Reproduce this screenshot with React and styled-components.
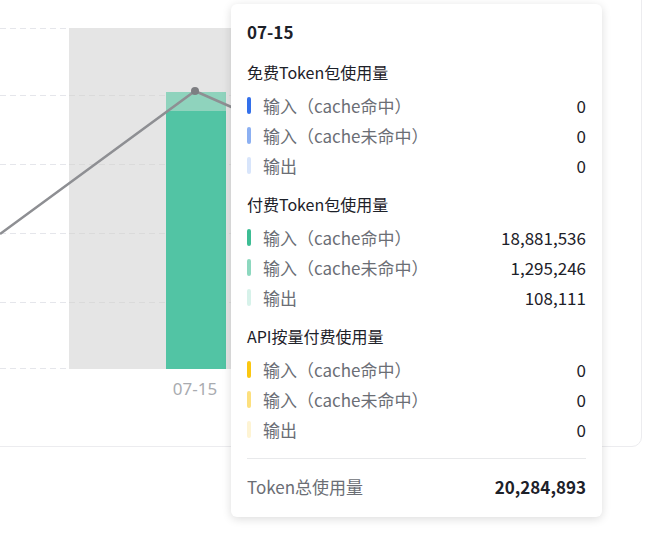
import React from "react";
import styled, { createGlobalStyle } from "styled-components";

const Global = createGlobalStyle`
  body { margin: 0; background: #fff; font-family: "Noto Sans CJK SC", "Noto Sans", sans-serif; }
`;
const Page = styled.div`position: relative; width: 650px; height: 537px; overflow: hidden;`;
const Card = styled.div`
  position: absolute; left: -20px; top: -20px; width: 660px; height: 465px;
  border: 1px solid #ececef; border-radius: 10px; background: #fff;
`;
const Chart = styled.svg`position: absolute; left: 0; top: 0;`;
const Tip = styled.div`
  position: absolute; left: 231px; top: 4px; width: 371px; box-sizing: border-box;
  padding: 14px 16px 16px; background: #fff; border-radius: 6px;
  box-shadow: 0 2px 10px rgba(0,0,0,0.14);
`;
const Title = styled.div`font-size: 17px; font-weight: 700; color: #1d2129; line-height: 28px; margin-bottom: 15px;`;
const Section = styled.div`font-size: 16px; color: #1d2129; line-height: 22px; margin: 0 0 7px; padding-top: ${p => p.$first ? 0 : 13}px;`;
const Row = styled.div`display: flex; align-items: center; height: 30px; font-size: 17px;`;
const Mark = styled.span`width: 4px; height: 17px; border-radius: 2px; background: ${p => p.$c}; margin-right: 12px;`;
const Label = styled.span`color: #6b6e75; flex: 1;`;
const Val = styled.span`color: #1d2129;`;
const Divider = styled.div`height: 1px; background: #e8e9eb; margin: 14px 0 14px;`;
const Total = styled.div`display: flex; justify-content: space-between; font-size: 17px; line-height: 28px;`;

const groups = [
  ["免费Token包使用量", ["#3370eb", "#8cb0f2", "#d8e5fb"], ["0", "0", "0"]],
  ["付费Token包使用量", ["#3dbd94", "#8dd8bf", "#d7f2ea"], ["18,881,536", "1,295,246", "108,111"]],
  ["API按量付费使用量", ["#fbc711", "#fde07e", "#fef4d4"], ["0", "0", "0"]],
];
const labels = ["输入（cache命中）", "输入（cache未命中）", "输出"];

export default function App() {
  return (
    <Page>
      <Global />
      <Card />
      <Chart width="650" height="450">
        <rect x="69" y="28" width="170" height="341" fill="#e5e5e5" />
        {[28, 95, 164, 233, 302, 368].map(y => (
          <line key={y} x1="0" x2="69" y1={y + 0.5} y2={y + 0.5} stroke="#e5e6eb" strokeDasharray="6 4" />
        ))}
        {[95, 164, 233, 302].map(y => (
          <line key={"g" + y} x1="69" x2="240" y1={y + 0.5} y2={y + 0.5} stroke="#dadada" strokeDasharray="6 4" />
        ))}
        <rect x="166" y="111" width="60" height="258" fill="#52c4a4" />
        <rect x="166" y="92" width="60" height="19" fill="#8fd3bd" />
        <polyline points="0,234 195,91 245,113" fill="none" stroke="#8e8f93" strokeWidth="2.5" />
        <circle cx="195" cy="91" r="4" fill="#7d7e82" />
        <text x="195" y="395" textAnchor="middle" fontSize="17" fill="#a9abb0" fontFamily="Noto Sans, sans-serif">07-15</text>
      </Chart>
      <Tip>
        <Title>07-15</Title>
        {groups.map(([name, colors, vals], gi) => (
          <div key={name}>
            <Section $first={gi === 0}>{name}</Section>
            {labels.map((l, i) => (
              <Row key={l}>
                <Mark $c={colors[i]} />
                <Label>{l}</Label>
                <Val>{vals[i]}</Val>
              </Row>
            ))}
          </div>
        ))}
        <Divider />
        <Total>
          <Label>Token总使用量</Label>
          <Val style={{ fontWeight: 700 }}>20,284,893</Val>
        </Total>
      </Tip>
    </Page>
  );
}
